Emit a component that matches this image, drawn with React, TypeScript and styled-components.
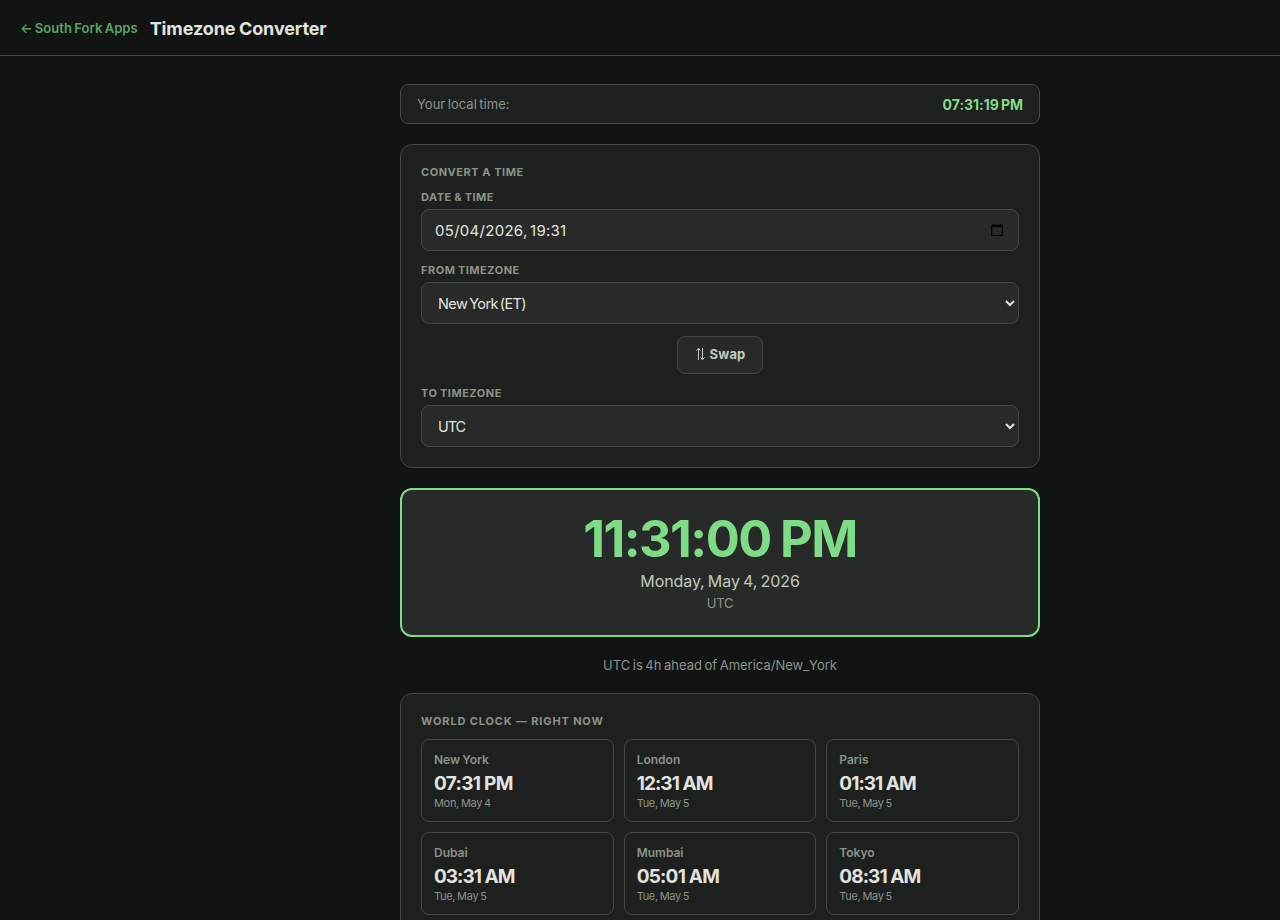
import React, { useState } from "react";
import styled, { createGlobalStyle } from "styled-components";

const color = {
  bg: "#111413",
  card: "#1e201f",
  field: "#282a29",
  line: "#424845",
  text: "#e2e3df",
  soft: "#c1c9be",
  muted: "#8b9389",
  link: "#57a463",
  accent: "#7ddc85",
};

const GlobalStyle = createGlobalStyle`
  *, *::before, *::after { box-sizing: border-box; }
  body {
    margin: 0;
    overflow: hidden;
    background: ${color.bg};
    color: ${color.text};
    font-family: Inter, "Liberation Sans", sans-serif;
  }
`;

const Page = styled.div`
  height: 920px;
  overflow: hidden;
`;

const Header = styled.header`
  display: flex;
  align-items: center;
  gap: 12px;
  height: 56px;
  padding: 0 20px;
  border-bottom: 1px solid ${color.line};
`;

const BackLink = styled.a`
  color: ${color.link};
  font-size: 13px;
  font-weight: 600;
  letter-spacing: 0.03px;
  word-spacing: -0.9px;
  text-decoration: none;
`;

const Title = styled.h1`
  margin: 0;
  padding-top: 1px;
  font-size: 18px;
  font-weight: 700;
  letter-spacing: -0.11px;
  word-spacing: -0.6px;
`;

const Main = styled.main`
  display: flex;
  flex-direction: column;
  width: 640px;
  margin: 28px 0 0 400px;
`;

const LocalBar = styled.section`
  display: flex;
  align-items: center;
  justify-content: space-between;
  height: 40px;
  padding: 0 16px;
  margin-bottom: 20px;
  background: ${color.card};
  border: 1px solid ${color.line};
  border-radius: 8px;
`;

const LocalLabel = styled.span`
  color: ${color.muted};
  font-size: 13px;
  letter-spacing: 0.02px;
  word-spacing: -1.2px;
`;

const LocalTime = styled.span`
  color: ${color.accent};
  font-size: 14px;
  font-weight: 700;
  letter-spacing: -0.02px;
  word-spacing: -1.2px;
`;

const Card = styled.section`
  padding: 20px;
  background: ${color.card};
  border: 1px solid ${color.line};
  border-radius: 12px;
`;

const CardTitle = styled.h2<{ $tracking: number }>`
  margin: 0 0 11px;
  color: ${color.muted};
  font-size: 11px;
  font-weight: 700;
  line-height: 14px;
  letter-spacing: ${(p) => p.$tracking}px;
  text-transform: uppercase;
`;

const Label = styled.label`
  display: block;
  margin-bottom: 5px;
  color: ${color.muted};
  font-size: 11px;
  font-weight: 700;
  line-height: 14px;
  letter-spacing: 0.5px;
  word-spacing: -0.6px;
  text-transform: uppercase;
`;

const DateField = styled.div`
  display: flex;
  align-items: center;
  justify-content: space-between;
  height: 42px;
  margin-bottom: 12px;
  padding: 0 15px 0 13px;
  background: ${color.field};
  border: 1px solid ${color.line};
  border-radius: 8px;
  font-size: 15px;
  letter-spacing: 0.28px;
  word-spacing: -2px;
`;

const Select = styled.select<{ $tracking: number }>`
  display: block;
  width: 100%;
  height: 42px;
  padding: 0 12px;
  background: ${color.field};
  border: 1px solid ${color.line};
  border-radius: 8px;
  color: ${color.text};
  font-family: inherit;
  font-size: 14.5px;
  letter-spacing: ${(p) => p.$tracking}px;
  word-spacing: -1.5px;
`;

const SwapRow = styled.div`
  display: flex;
  justify-content: center;
  margin: 12px 0;
`;

const SwapButton = styled.button`
  display: flex;
  align-items: center;
  justify-content: center;
  gap: 5px;
  width: 86px;
  height: 38px;
  padding: 0 0 2px 1px;
  background: ${color.field};
  border: 1px solid ${color.line};
  border-radius: 8px;
  color: ${color.soft};
  font-family: inherit;
  font-size: 13px;
  font-weight: 700;
  letter-spacing: 0.15px;
`;

const Result = styled.section`
  display: flex;
  flex-direction: column;
  align-items: center;
  height: 149px;
  margin-top: 20px;
  padding-top: 22px;
  background: ${color.field};
  border: 2px solid ${color.accent};
  border-radius: 12px;
`;

const ResultTime = styled.div`
  color: ${color.accent};
  font-size: 50.5px;
  font-weight: 700;
  line-height: 54px;
  letter-spacing: -1.55px;
  word-spacing: -1px;
`;

const ResultDate = styled.div`
  margin-top: 4px;
  color: ${color.soft};
  font-size: 16px;
  line-height: 22px;
  letter-spacing: -0.08px;
  word-spacing: -1.2px;
`;

const ResultZone = styled.div`
  margin-top: 2px;
  color: ${color.muted};
  font-size: 13px;
  line-height: 18px;
  letter-spacing: -0.2px;
`;

const Offset = styled.p`
  margin: 21px 0 20px;
  color: ${color.muted};
  font-size: 13px;
  line-height: 15px;
  letter-spacing: 0;
  word-spacing: -1.1px;
  text-align: center;
`;

const ClockGrid = styled.div`
  display: grid;
  grid-template-columns: repeat(3, 1fr);
  gap: 10px;
`;

const Clock = styled.article`
  height: 83px;
  padding: 12px;
  border: 1px solid ${color.line};
  border-radius: 8px;
`;

const City = styled.div`
  color: ${color.muted};
  font-size: 12px;
  font-weight: 600;
  line-height: 15px;
  word-spacing: -0.8px;
`;

const ClockTime = styled.div<{ $tracking: number }>`
  margin-top: 5px;
  font-size: 19px;
  font-weight: 700;
  line-height: 24px;
  letter-spacing: ${(p) => p.$tracking}px;
`;

const ClockDate = styled.div`
  margin-top: -1px;
  color: ${color.muted};
  font-size: 11px;
  line-height: 16px;
  letter-spacing: -0.32px;
  word-spacing: -0.8px;
`;

const CalendarIcon = () => (
  <svg width="12" height="14" viewBox="0 0 12 14" fill="#000">
    <path fillRule="evenodd" d="M1.9 0.7h1.3v1.1h5.6v-1.1h1.3v1.1h.6c.7 0 1.2.5 1.2 1.2v8.900c0 .7-.5 1.2-1.2 1.2H1.300C.6 13.100.1 12.600.1 11.900V3c0-.7.5-1.2 1.2-1.2h.6zM1.300 4.100v7.800h9.400V4.100z" />
  </svg>
);

const SwapIcon = () => (
  <svg width="9" height="14" viewBox="0 0 9 14" fill="none" stroke="currentColor" strokeWidth="1">
    <path d="M2.500 13V1.200M0.500 3.600L2.500 1.200L4.300 3.600M6.500 1V12.800M4.700 10.400L6.500 12.800L8.500 10.400" />
  </svg>
);

const zones = ["New York (ET)", "UTC", "London", "Paris", "Dubai", "Mumbai", "Tokyo"];

const clocks = [
  { city: "New York", time: "07:31 PM", date: "Mon, May 4", tracking: -0.69 },
  { city: "London", time: "12:31 AM", date: "Tue, May 5", tracking: -0.95 },
  { city: "Paris", time: "01:31 AM", date: "Tue, May 5", tracking: -0.97 },
  { city: "Dubai", time: "03:31 AM", date: "Tue, May 5", tracking: -0.99 },
  { city: "Mumbai", time: "05:01 AM", date: "Tue, May 5", tracking: -0.78 },
  { city: "Tokyo", time: "08:31 AM", date: "Tue, May 5", tracking: -0.93 },
];

export default function App() {
  const [from, setFrom] = useState("New York (ET)");
  const [to, setTo] = useState("UTC");
  const swap = () => {
    setFrom(to);
    setTo(from);
  };

  return (
    <Page>
      <GlobalStyle />
      <Header>
        <BackLink href="#">← South Fork Apps</BackLink>
        <Title>Timezone Converter</Title>
      </Header>
      <Main>
        <LocalBar>
          <LocalLabel>Your local time:</LocalLabel>
          <LocalTime>07:31:19 PM</LocalTime>
        </LocalBar>
        <Card>
          <CardTitle $tracking={0.53}>Convert a time</CardTitle>
          <Label>Date &amp; Time</Label>
          <DateField>
            05/04/2026, 19:31
            <CalendarIcon />
          </DateField>
          <Label htmlFor="from">From timezone</Label>
          <Select id="from" $tracking={-0.6} value={from} onChange={(e) => setFrom(e.target.value)}>
            {zones.map((z) => <option key={z}>{z}</option>)}
          </Select>
          <SwapRow>
            <SwapButton type="button" onClick={swap}>
              <SwapIcon />
              Swap
            </SwapButton>
          </SwapRow>
          <Label htmlFor="to">To timezone</Label>
          <Select id="to" $tracking={-1.1} value={to} onChange={(e) => setTo(e.target.value)}>
            {zones.map((z) => <option key={z}>{z}</option>)}
          </Select>
        </Card>
        <Result>
          <ResultTime>11:31:00 PM</ResultTime>
          <ResultDate>Monday, May 4, 2026</ResultDate>
          <ResultZone>UTC</ResultZone>
        </Result>
        <Offset>UTC is 4h ahead of America/New_York</Offset>
        <Card>
          <CardTitle $tracking={0.85}>World clock — right now</CardTitle>
          <ClockGrid>
            {clocks.map((c) => (
              <Clock key={c.city}>
                <City>{c.city}</City>
                <ClockTime $tracking={c.tracking}>{c.time}</ClockTime>
                <ClockDate>{c.date}</ClockDate>
              </Clock>
            ))}
          </ClockGrid>
        </Card>
      </Main>
    </Page>
  );
}
